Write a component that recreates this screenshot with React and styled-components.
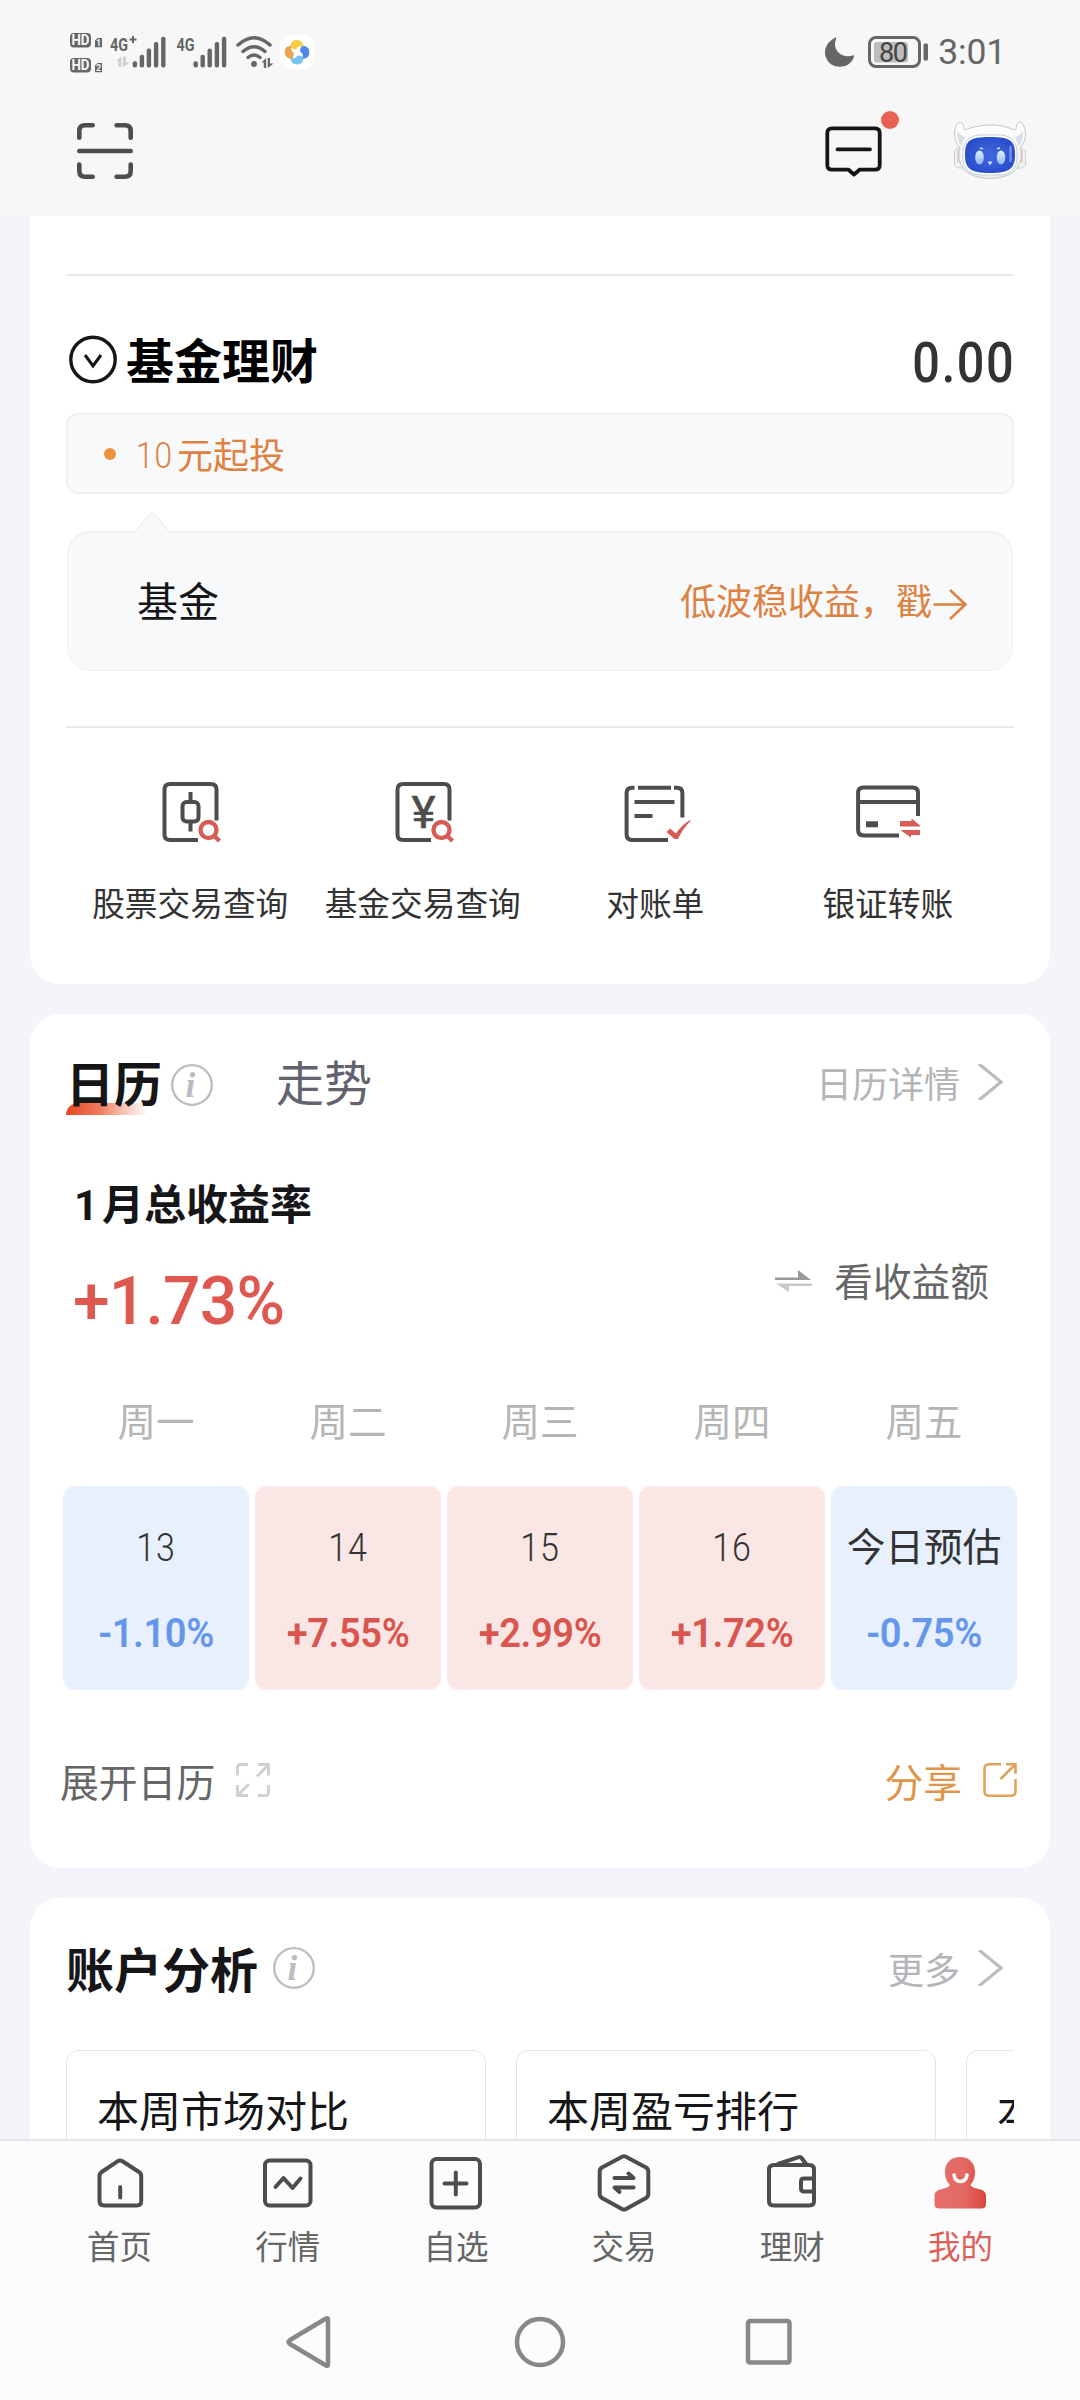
import React from 'react';
import styled, { createGlobalStyle } from 'styled-components';

const GlobalStyle = createGlobalStyle`
  body {
    margin: 0;
    background: #f3f5fa;
    font-family: 'Noto Sans CJK SC', sans-serif;
  }

  svg {
    display: block;
    flex-shrink: 0;
  }
`;

const Screen = styled.div`
  width: 1080px;
  height: 2400px;
  display: flex;
  flex-direction: column;
  overflow: hidden;
  background: #f3f5fa;
`;

const Header = styled.header`
  height: 216px;
  flex-shrink: 0;
  background: #f7f7f7;
`;

const StatusBar = styled.div`
  height: 104px;
  box-sizing: border-box;
  padding: 0 74px 0 68px;
  display: flex;
  align-items: center;
  justify-content: space-between;
`;

const StatusGroup = styled.div`
  display: flex;
  align-items: center;
`;

const Clock = styled.span`
  font-family: Roboto, sans-serif;
  font-size: 35.5px;
  line-height: 40px;
  letter-spacing: -0.2px;
  color: #666;
  margin: 0 0 0 8px;
`;

const AppBar = styled.div`
  height: 94px;
  padding: 0 52px 0 75px;
  display: flex;
  align-items: center;
  justify-content: space-between;
`;

const AppBarActions = styled.div`
  display: flex;
  align-items: center;
  gap: 50px;
`;

const Content = styled.main`
  height: 1923px;
  flex-shrink: 0;
  overflow: hidden;
  padding: 0 30px;
  display: flex;
  flex-direction: column;
  gap: 30px;
`;

const Card = styled.section`
  flex-shrink: 0;
  box-sizing: border-box;
  height: ${({ $height }) => $height}px;
  background: #fff;
  border-radius: ${({ $flatTop }) => ($flatTop ? '0 0 30px 30px' : '30px')};
  padding: ${({ $flatTop }) => ($flatTop ? '58px 36px 0' : '0 36px')};
`;

const Divider = styled.hr`
  height: 2px;
  margin: 0;
  border: none;
  background: #e8e9ec;
`;

const FundHeader = styled.div`
  height: 137px;
  box-sizing: border-box;
  padding: 30px 0 0 2px;
  display: flex;
  align-items: center;
  justify-content: space-between;
`;

const TitleGroup = styled.div`
  display: flex;
  align-items: center;
  gap: 8px;
`;

const Title = styled.h2`
  margin: 0 0 3px;
  font-size: 48px;
  line-height: 60px;
  font-weight: 700;
  color: ${({ $color }) => $color || '#161618'};
  position: relative;
  z-index: 0;
`;

const Amount = styled.span`
  font-family: Roboto, sans-serif;
  font-size: 55px;
  line-height: 60px;
  font-weight: 500;
  letter-spacing: 1.8px;
  color: #333;
  margin: 7px -1px 0 0;
  transform: scaleX(0.885);
  transform-origin: right;
`;

const TipBox = styled.div`
  height: 81px;
  box-sizing: border-box;
  border: 2px solid #eeeff1;
  border-radius: 12px;
  background: #f8f9fb;
  padding: 0 36px 1px;
  display: flex;
  align-items: center;
  font-size: 36px;
  line-height: 40px;
  color: #dd8242;
`;

const TipDot = styled.i`
  width: 12px;
  height: 12px;
  margin: 2px 20px 0 0;
  border-radius: 50%;
  background: #ec933f;
`;

const TipNumber = styled.span`
  font-family: Roboto, sans-serif;
  font-weight: 300;
  letter-spacing: 1px;
  margin: 5px -1px 0 0;
  transform: scaleX(0.88);
  transform-origin: left;
`;

const FundBox = styled.div`
  position: relative;
  height: 140px;
  box-sizing: border-box;
  margin: 37px 1px 55px;
  padding: 0 44px 5px 69px;
  border: 1.5px solid #eef0f2;
  border-top-width: 2px;
  border-radius: 24px;
  background: #f8f9fb;
  display: flex;
  align-items: center;
  justify-content: space-between;
`;

const Pointer = styled.svg`
  position: absolute;
  left: 64px;
  top: -22px;
`;

const FundName = styled.span`
  font-size: 41px;
  color: #161618;
`;

const FundPromo = styled.span`
  display: flex;
  align-items: center;
  font-size: 36px;
  color: #dd8242;
`;

const PromoArrow = styled.svg`
  margin-top: 10px;
`;

const QuickList = styled.div`
  display: grid;
  grid-template-columns: repeat(4, 232.5px);
  justify-content: center;
  margin-left: -2px;
  padding-top: 48px;
`;

const QuickItem = styled.div`
  display: flex;
  flex-direction: column;
  align-items: center;
  gap: 34px;
  font-size: 32.7px;
  line-height: 40px;
  color: #333;
`;

const SectionHeader = styled.div`
  display: flex;
  align-items: center;
  height: 60px;
  padding-top: ${({ $top }) => $top}px;
`;

const TabUnderline = styled.span`
  position: absolute;
  z-index: -1;
  left: 0;
  bottom: -4px;
  width: 82px;
  height: 12px;
  border-radius: 12px 0 0 0;
  background: linear-gradient(90deg, #e84724, #ef7a5b 40%, #f9cdc3 75%, #fff);
`;

const InfoIcon = styled.svg`
  margin-left: ${({ $left }) => $left}px;
  margin-top: ${({ $top }) => $top || 0}px;
`;

const InactiveTab = styled.span`
  margin: 0 0 4px 63px;
  font-size: 48px;
  line-height: 60px;
  color: #62636f;
`;

const MoreLink = styled.span`
  margin-left: auto;
  padding-right: 11px;
  display: flex;
  align-items: center;
  gap: 17px;
  font-size: 36px;
  line-height: 40px;
  color: #b4b5b9;
`;

const MonthSummary = styled.div`
  display: flex;
  justify-content: space-between;
  padding: 62px 25px 0 8px;
`;

const MonthTitle = styled.div`
  font-size: 42px;
  line-height: 56px;
  font-weight: 700;
  color: #161618;
`;

const MonthNumber = styled.span`
  font-family: Roboto, sans-serif;
  margin-right: 4px;
`;

const MonthRate = styled.div`
  font-family: Roboto, sans-serif;
  font-size: 66px;
  line-height: 80px;
  font-weight: 500;
  letter-spacing: -0.8px;
  color: #de5850;
  margin: 28px 0 0 -1px;
`;

const SwitchView = styled.div`
  display: flex;
  align-items: center;
  gap: 22px;
  height: 50px;
  margin-top: 80px;
  font-size: 38.7px;
  color: #666;
`;

const WeekGrid = styled.div`
  display: grid;
  grid-template-columns: repeat(5, 186px);
  gap: 6px;
  margin: 0 -3px;
`;

const WeekDay = styled.div`
  height: 50px;
  margin: 52px 0 42px;
  font-size: 38.5px;
  line-height: 50px;
  text-align: center;
  color: #b5b5b5;
`;

const DayCell = styled.div`
  height: 204px;
  box-sizing: border-box;
  padding-top: 37px;
  border-radius: 12px;
  text-align: center;
  background: ${({ $up }) => ($up ? '#fae6e5' : '#e8f0fe')};
`;

const DayLabel = styled.div`
  font-family: Roboto, 'Noto Sans CJK SC', sans-serif;
  font-size: 38.7px;
  line-height: 50px;
  font-weight: ${({ $today }) => ($today ? 400 : 300)};
  letter-spacing: ${({ $today }) => ($today ? 0 : 1)}px;
  color: #333;
  white-space: nowrap;
  transform: ${({ $today }) => ($today ? 'none' : 'scaleX(0.88)')};
`;

const DayRate = styled.div`
  font-family: Roboto, sans-serif;
  font-size: 40px;
  line-height: 50px;
  font-weight: 600;
  letter-spacing: -0.4px;
  margin-top: 36px;
  transform: scaleX(0.95);
  color: ${({ $up }) => ($up ? '#d9564f' : '#6497ea')};
`;

const CalendarFooter = styled.div`
  display: flex;
  align-items: center;
  justify-content: space-between;
  margin: 65px -4px 0 -6px;
  height: 50px;
`;

const FooterAction = styled.span`
  display: flex;
  align-items: center;
  gap: 20px;
  font-size: 38.8px;
  color: ${({ $color }) => $color};
`;

const AnalysisList = styled.div`
  display: flex;
  gap: 30px;
  margin-top: 52px;
  overflow: hidden;
`;

const AnalysisCard = styled.div`
  flex-shrink: 0;
  width: 420px;
  height: 200px;
  box-sizing: border-box;
  padding: 30px;
  border: 1px solid #e4e5e7;
  border-radius: 12px;
  font-size: 42px;
  line-height: 56px;
  color: #161618;
`;

const TabBar = styled.nav`
  height: 136px;
  flex-shrink: 0;
  border-top: 2px solid #e3e5ea;
  background: #fcfcfc;
  display: grid;
  grid-template-columns: repeat(6, 168.2px);
  justify-content: center;
`;

const TabItem = styled.div`
  display: flex;
  flex-direction: column;
  align-items: center;
  padding-top: 12px;
  gap: 12px;
  font-size: 32.5px;
  line-height: 40px;
  color: ${({ $active }) => ($active ? '#dc6158' : '#666')};
`;

const SystemNav = styled.div`
  flex: 1;
  background: #fcfcfc;
  display: flex;
  justify-content: center;
  gap: 173px;
  padding-top: 37px;
`;

const Signal = () => (
  <g fill="#666">
    <rect x="0" y="24.5" width="4.4" height="6.3" rx="2" />
    <rect x="7" y="18" width="4.4" height="12.8" rx="2" />
    <rect x="14" y="11.7" width="4.4" height="19" rx="2" />
    <rect x="21.2" y="5.3" width="4.4" height="25.5" rx="2" />
    <rect x="28.4" y="0" width="4.4" height="30.8" rx="2" />
  </g>
);

const DataArrows = () => (
  <path d="M0 4.5 4.6 0v10H2.3V4.5zM6.2 0h2.3v5.5H12L6.2 10z" />
);

// one blade of the pinwheel, turned around 297,52.3 for the other three
const petal = 'M290.500 47C290.500 42.500 293 40 297 40c4.500 0 6.500 3 6.500 6.500-4-.5-6 .5-7 2.500-2 .5-4 0-6-2z';

const StatusIcons = () => (
  <svg width="250" height="44" viewBox="68 30 250 44">
    <g fill="#666">
      <rect x="70" y="33" width="21" height="14.5" rx="4" />
      <rect x="70" y="58" width="21" height="14.5" rx="4" />
      <path d="M95 47.300V40.500l2.500-2.500h4.500v9.300zM95 72.300V65.500l2.500-2.500h4.500v9.300z" />
    </g>
    <g fontFamily="Roboto, sans-serif" fontWeight="700">
      <g fill="#f7f7f7" fontSize="14">
        <text x="71.5" y="45.3" textLength="18" lengthAdjust="spacingAndGlyphs">HD</text>
        <text x="71.5" y="70.3" textLength="18" lengthAdjust="spacingAndGlyphs">HD</text>
        <text x="96" y="46.3" fontSize="9">1</text>
        <text x="96" y="71.3" fontSize="9">2</text>
      </g>
      <g fill="#666" fontSize="19">
        <text x="110" y="50.5" textLength="18" lengthAdjust="spacingAndGlyphs">4G</text>
        <text x="176.5" y="50.5" textLength="18" lengthAdjust="spacingAndGlyphs">4G</text>
      </g>
    </g>
    <path d="M129.500 39.500h7M133 36v7" stroke="#666" strokeWidth="2" />
    <g transform="translate(116 56.5) scale(1.15 1.05)" fill="#ccc"><DataArrows /></g>
    <g transform="translate(132.7 36.7)"><Signal /></g>
    <g transform="translate(193.5 36.7)"><Signal /></g>
    <g fill="none" stroke="#666" strokeWidth="3.4" strokeLinecap="round">
      <path d="M238 45q16-14.500 32 0" />
      <path d="M243 51.500q11-9.500 22 0" />
      <path d="M248 57.500q6-5 12 0" />
    </g>
    <circle cx="254" cy="64" r="2.9" fill="#666" />
    <g transform="translate(261.5 58)" fill="#666"><DataArrows /></g>
    <rect x="280" y="35" width="34" height="34" rx="9" fill="#fff" />
    <path d={petal} fill="#75c4f1" transform="rotate(180 297 52.3)" />
    <path d={petal} fill="#4f87ea" transform="rotate(90 297 52.3)" />
    <path d={petal} fill="#eda64f" transform="rotate(270 297 52.3)" />
    <path d={petal} fill="#f6cc4b" />
  </svg>
);

const BatteryIcons = () => (
  <svg width="107" height="44" viewBox="824 30 107 44">
    <path d="M836.500 37.500c-6 3-10.500 8-10.500 15 0 8 6.500 14.300 14.800 14.300 7 0 12.500-4 14.200-10.300.2-1-.4-1.500-1.500-1-9 3-17.500-3-17.500-11 0-2 .5-4 1-5.500.4-1.200.2-2-.5-1.500z" fill="#666" />
    <rect x="870.5" y="37.5" width="50" height="29" rx="6.5" fill="none" stroke="#666" strokeWidth="3" />
    <rect x="875" y="42" width="34" height="20.5" rx="3" fill="#bdbdbd" />
    <text x="880" y="61.5" fontFamily="Roboto, sans-serif" fontSize="27" fill="#444" textLength="29">80</text>
    <rect x="924.5" y="43.5" width="4.5" height="17" rx="1.5" fill="#666" />
  </svg>
);

const ScanIcon = () => (
  <svg width="60" height="60" viewBox="0 0 60 60" fill="none" stroke="#4d4d4d" strokeWidth="4.6" strokeLinecap="round" strokeLinejoin="round">
    <path d="M4.300 16.700V10q0-5.700 5.700-5.700h7.700M41.600 4.300H50q5.700 0 5.700 5.700v6.700M4.300 43.500V50q0 5.700 5.700 5.700h7.700M41.600 55.700H50q5.700 0 5.700-5.700v-6.500M4.300 30h51.400" />
  </svg>
);

const MessageIcon = () => (
  <svg width="80" height="86" viewBox="823 108 80 86">
    <path d="M832 128.300h43q4.700 0 4.700 4.700v32q0 4.700-4.700 4.700h-15.500l-5.500 4.800-5.500-4.800H832q-4.700 0-4.700-4.700v-32q0-4.700 4.700-4.700zM837.500 149.300h32.500" fill="none" stroke="#161618" strokeWidth="3.8" strokeLinecap="round" strokeLinejoin="round" />
    <circle cx="890" cy="120" r="9" fill="#e96152" />
  </svg>
);

const RobotIcon = () => (
  <svg width="75" height="64" viewBox="953 118 75 64">
    <defs>
      <linearGradient id="shell" x1="0" y1="0" x2="0" y2="1">
        <stop offset="0" stopColor="#fff" />
        <stop offset="1" stopColor="#eceef2" />
      </linearGradient>
      <radialGradient id="visor">
        <stop offset="0" stopColor="#4268de" />
        <stop offset="1" stopColor="#2b4fcc" />
      </radialGradient>
      <linearGradient id="eye" x1="0" y1="0" x2="0" y2="1">
        <stop offset="0" stopColor="#e6f2ff" />
        <stop offset="1" stopColor="#8fb5f2" />
      </linearGradient>
    </defs>
    <rect x="954.5" y="147" width="12" height="20" rx="5" fill="#f5f2f3" stroke="#c9cbd0" />
    <rect x="1013.5" y="147" width="12" height="20" rx="5" fill="#f5f2f3" stroke="#c9cbd0" />
    <path d="M958 149v13M1022 149v13" stroke="#ddc5c3" strokeWidth="1.5" />
    <path d="M958.500 121.500c-5 5-6 17 1 25-3 17 4 30 30.500 31 26.500-1 33.500-14 30.500-31 7-8 6-20 1-25-3-1-5 1-5 5q0 3-3 2c-14-6-33-6-47 0q-3 1-3-2c0-4-2-6-5-5z" fill="url(#shell)" stroke="#c2c5cb" />
    <path d="M957 129q0 11 4 16l4-9q-6-2-8-7z" fill="#d9dde5" />
    <path d="M1023 129q0 11-4 16l-4-9q6-2 8-7z" fill="#d9dde5" />
    <rect x="963" y="134" width="54" height="40" rx="16" fill="#fff" stroke="#c9cdd8" />
    <path d="M990 136c-21 0-25 4-25 18 0 13 5 18 25 18s25-5 25-18c0-14-4-18-25-18z" fill="url(#visor)" />
    <ellipse cx="979.5" cy="156.5" rx="4.3" ry="7" fill="url(#eye)" />
    <ellipse cx="1001" cy="156.5" rx="4.3" ry="7" fill="url(#eye)" />
    <path d="M980 147l3 .8M1000 147l-3 .8" stroke="#cfe0ff" strokeWidth="1.5" />
    <path d="M987.500 160.500h5l-2.500 4z" fill="#cfe0ff" />
    <path d="M1010.500 146v14" stroke="#7090ee" strokeWidth="2.5" strokeLinecap="round" />
  </svg>
);

const CircleDownIcon = () => (
  <svg width="50" height="50" viewBox="0 0 50 50" fill="none" stroke="#161618">
    <circle cx="25" cy="24.5" r="22.2" strokeWidth="3.4" />
    <path d="M17 20 25 31 33 20" strokeWidth="3" />
  </svg>
);

const Info = ({ left, top }) => (
  <InfoIcon $left={left} $top={top} width="42" height="42" viewBox="0 0 42 42">
    <circle cx="21" cy="21" r="19.8" fill="none" stroke="#bbbbc3" strokeWidth="2.3" />
    <text x="14.5" y="32.5" fontFamily="'Liberation Serif', serif" fontStyle="italic" fontWeight="700" fontSize="35" fill="#bbbbc3">i</text>
  </InfoIcon>
);

const Chevron = () => (
  <svg width="26" height="36" viewBox="0 0 26 36">
    <path d="M2 0 24 18 2 36" fill="none" stroke="#bbbbc3" strokeWidth="3.2" />
  </svg>
);

const SwapIcon = () => (
  <svg width="37" height="26" viewBox="0 -3 37 26">
    <path d="M0 8.500h23V1l13 10H0z" fill="#999" />
    <path d="M37 14.500H1l13 8.500v-6h23z" fill="#c8c8c8" />
  </svg>
);

const ExpandIcon = () => (
  <svg width="36" height="36" viewBox="0 0 36 36" fill="none" stroke="#d0d0d0" strokeWidth="2.8">
    <path d="M2.500 13.500v-8q0-3 3-3h7.500M23 2.500h10.500v11M33.500 2.500 22 14.500M2.500 23v10.500h10.500M2.500 33.500 14 22M33.500 23v7.500q0 3-3 3H23" />
  </svg>
);

const ShareIcon = () => (
  <svg width="36" height="36" viewBox="0 0 36 36" fill="none" stroke="#e3a05c" strokeWidth="2.6">
    <path d="M19 2.300H7q-4.500 0-4.500 4.500v22.400q0 4.500 4.500 4.500h22q4.500 0 4.500-4.500V17" />
    <path d="M24 2.300h9.500v9.500M33.500 2.300 18.500 17" />
  </svg>
);

const Lens = () => (
  <g fill="none" stroke="#d75c57" strokeWidth="4.3">
    <circle cx="54.5" cy="54" r="8" />
    <path d="m60.500 60 5 5" />
  </g>
);

const frame = 'M62.500 44.500V13.500q0-5.500-5.500-5.500H16q-5.500 0-5.500 5.500V58.500q0 5.500 5.500 5.500H44';

const quickItems = [
  {
    label: '股票交易查询',
    icon: (
      <>
        <path d={frame} />
        <rect x="28.5" y="26" width="16" height="19.5" rx="4" />
        <path d="M36.500 16v10M36.500 46v9.500" />
        <Lens />
      </>
    ),
  },
  {
    label: '基金交易查询',
    icon: (
      <>
        <path d={frame} />
        <text x="36.5" y="52" textAnchor="middle" fontFamily="Roboto, sans-serif" fontSize="45" fill="#4d4d4d" stroke="#4d4d4d" strokeWidth="0.6" textLength="24" lengthAdjust="spacingAndGlyphs">¥</text>
        <Lens />
      </>
    ),
  },
  {
    label: '对账单',
    icon: (
      <>
        <path d="M15.500 11.800H13q-5.400 0-5.400 5.400V58.600q0 5.400 5.400 5.400H49M19 11.800h33M55 11.800h3q5.400 0 5.400 5.400V41.500M15.500 26h40M15.500 40h18" />
        <path d="m47.500 56 3.500-3.500 6 5q5-8 14-13.500l.5 1q-8 8-12.500 18h-3.500z" fill="#d75c57" stroke="none" />
      </>
    ),
  },
  {
    label: '银证转账',
    icon: (
      <>
        <path d="M66 40V17q0-5.400-5.400-5.400H11.500q-5.400 0-5.400 5.400V54q0 5.400 5.400 5.400H47M6 26h60" />
        <path d="M14 48.300h12" strokeWidth="6" />
        <path d="M48 45h11.500v-2.500L68 49.500v1H48zM68 54v5h-9v2.500L49 54.500V54z" fill="#d75c57" stroke="none" />
      </>
    ),
  },
];

const days = [
  { week: '周一', label: '13', rate: '-1.10%' },
  { week: '周二', label: '14', rate: '+7.55%', up: true },
  { week: '周三', label: '15', rate: '+2.99%', up: true },
  { week: '周四', label: '16', rate: '+1.72%', up: true },
  { week: '周五', label: '今日预估', rate: '-0.75%', today: true },
];

const tabs = [
  {
    label: '首页',
    icon: <path d="M27.500 8.300q2.500-1.500 5 0L49 19q2.200 1.500 2.200 4V48q0 4.500-4.500 4.500H14Q9.500 52.500 9.500 48V23q0-2.500 2.200-4zM30.200 34v10.500" />,
  },
  {
    label: '行情',
    icon: (
      <>
        <rect x="7" y="7.5" width="45.5" height="45" rx="4.5" />
        <path d="m17.500 34 8-9 9 10 8-9.500" />
      </>
    ),
  },
  {
    label: '自选',
    icon: (
      <>
        <rect x="5.5" y="6" width="48.5" height="48.5" rx="5" />
        <path d="M18.500 30.500h22M29.800 19.500v22" />
      </>
    ),
  },
  {
    label: '交易',
    icon: (
      <path d="M28 3.800q2-1.200 4 0L52 14.500q2.300 1.400 2.300 4V41q0 2.600-2.300 4L32 56q-2 1.200-4 0L8 45q-2.300-1.400-2.300-4V18.500q0-2.600 2.300-4zM20.500 25H39.500L34.500 20.500M39.500 34.500H20.500L25.500 39" />
    ),
  },
  {
    label: '理财',
    icon: (
      <path d="M12 12h35.500q4.500 0 4.500 4.500v31.500q0 4.500-4.500 4.500H11.500Q7 52.500 7 48V16.500Q7 12 12 12zM16 11 36 4.300q2.500-.8 4 1.200L44 11M51.500 25.500H42q-3 0-3 3v7q0 3 3 3h9.500" />
    ),
  },
  {
    label: '我的',
    active: true,
    icon: (
      <>
        <defs>
          <linearGradient id="mine">
            <stop offset="0" stopColor="#e76f69" />
            <stop offset="0.55" stopColor="#e56a65" />
            <stop offset="1" stopColor="#d9453e" />
          </linearGradient>
        </defs>
        <path d="M30 4c9 0 15 6 15 15 0 6-2 10-4.500 13 1 2 4 3 8 4 5 1 7.500 3 7.500 7v8q0 4.500-4.500 4.500h-42Q4.500 55.500 4.500 51v-8c0-4 2.500-6 7.500-7 4-1 7-2 8-4-3-3-5-7-5-13 0-9 6-15 15-15z" fill="url(#mine)" stroke="none" />
        <path d="M24 22q1 6.500 6.500 6.500T37 22" stroke="#fff" strokeWidth="3.5" />
      </>
    ),
  },
];

const analysis = ['本周市场对比', '本周盈亏排行', '本周操作'];

const App = () => (
  <>
    <GlobalStyle />
    <Screen>
      <Header>
        <StatusBar>
          <StatusIcons />
          <StatusGroup>
            <BatteryIcons />
            <Clock>3:01</Clock>
          </StatusGroup>
        </StatusBar>
        <AppBar>
          <ScanIcon />
          <AppBarActions>
            <MessageIcon />
            <RobotIcon />
          </AppBarActions>
        </AppBar>
      </Header>

      <Content>
        <Card $height={768} $flatTop>
          <Divider />
          <FundHeader>
            <TitleGroup>
              <CircleDownIcon />
              <Title $color="#000">基金理财</Title>
            </TitleGroup>
            <Amount>0.00</Amount>
          </FundHeader>
          <TipBox>
            <TipDot />
            <TipNumber>10</TipNumber>
            元起投
          </TipBox>
          <FundBox>
            <Pointer width="42" height="24" viewBox="0 0 42 24">
              <path d="M1.500 22 18.500 3q1.800-2 3.600 0L38.500 22v2h-37z" fill="#f8f9fb" />
              <path d="M1.500 22 18.500 3q1.800-2 3.600 0L38.500 22" fill="none" stroke="#eef0f2" strokeWidth="1.5" />
            </Pointer>
            <FundName>基金</FundName>
            <FundPromo>
              低波稳收益，戳
              <PromoArrow width="36" height="32" viewBox="0 0 36 32" fill="none" stroke="#dd8242" strokeWidth="2.6">
                <path d="M1.500 16.500H33M18 2 33.500 16.500 18 31" />
              </PromoArrow>
            </FundPromo>
          </FundBox>
          <Divider />
          <QuickList>
            {quickItems.map(({ label, icon }) => (
              <QuickItem key={label}>
                <svg width="72" height="72" viewBox="0 0 72 72" fill="none" stroke="#4d4d4d" strokeWidth="4">
                  {icon}
                </svg>
                {label}
              </QuickItem>
            ))}
          </QuickList>
        </Card>

        <Card $height={854}>
          <SectionHeader $top={38}>
            <Title>
              日历
              <TabUnderline />
            </Title>
            <Info left={9} top={5} />
            <InactiveTab>走势</InactiveTab>
            <MoreLink>
              日历详情
              <Chevron />
            </MoreLink>
          </SectionHeader>
          <MonthSummary>
            <div>
              <MonthTitle>
                <MonthNumber>1</MonthNumber>
                月总收益率
              </MonthTitle>
              <MonthRate>+1.73%</MonthRate>
            </div>
            <SwitchView>
              <SwapIcon />
              看收益额
            </SwitchView>
          </MonthSummary>
          <WeekGrid>
            {days.map(({ week }) => (
              <WeekDay key={week}>{week}</WeekDay>
            ))}
          </WeekGrid>
          <WeekGrid>
            {days.map(({ label, rate, up, today }) => (
              <DayCell key={label} $up={up}>
                <DayLabel $today={today}>{label}</DayLabel>
                <DayRate $up={up}>{rate}</DayRate>
              </DayCell>
            ))}
          </WeekGrid>
          <CalendarFooter>
            <FooterAction $color="#666">
              展开日历
              <ExpandIcon />
            </FooterAction>
            <FooterAction $color="#e0954a">
              分享
              <ShareIcon />
            </FooterAction>
          </CalendarFooter>
        </Card>

        <Card $height={400}>
          <SectionHeader $top={40}>
            <Title>账户分析</Title>
            <Info left={15} />
            <MoreLink>
              更多
              <Chevron />
            </MoreLink>
          </SectionHeader>
          <AnalysisList>
            {analysis.map((name) => (
              <AnalysisCard key={name}>{name}</AnalysisCard>
            ))}
          </AnalysisList>
        </Card>
      </Content>

      <TabBar>
        {tabs.map(({ label, icon, active }) => (
          <TabItem key={label} $active={active}>
            <svg width="60" height="60" viewBox="0 0 60 60" fill="none" stroke="#4d4d4d" strokeWidth="4" strokeLinecap="round" strokeLinejoin="round">
              {icon}
            </svg>
            {label}
          </TabItem>
        ))}
      </TabBar>
      <SystemNav>
        <svg width="56" height="56" viewBox="0 0 56 56" fill="none" stroke="#888" strokeWidth="4.5" strokeLinejoin="round">
          <path d="M45 5.500v45q0 2-2 1L7 30q-3-2 0-4L43 4.500q2-1 2 1z" />
        </svg>
        <svg width="56" height="56" viewBox="0 0 56 56" fill="none" stroke="#888" strokeWidth="4.5">
          <circle cx="28" cy="28" r="23" />
        </svg>
        <svg width="56" height="56" viewBox="0 0 56 56" fill="none" stroke="#888" strokeWidth="4.5">
          <rect x="7" y="7" width="41.5" height="41.5" rx="2" />
        </svg>
      </SystemNav>
    </Screen>
  </>
);

export default App;
